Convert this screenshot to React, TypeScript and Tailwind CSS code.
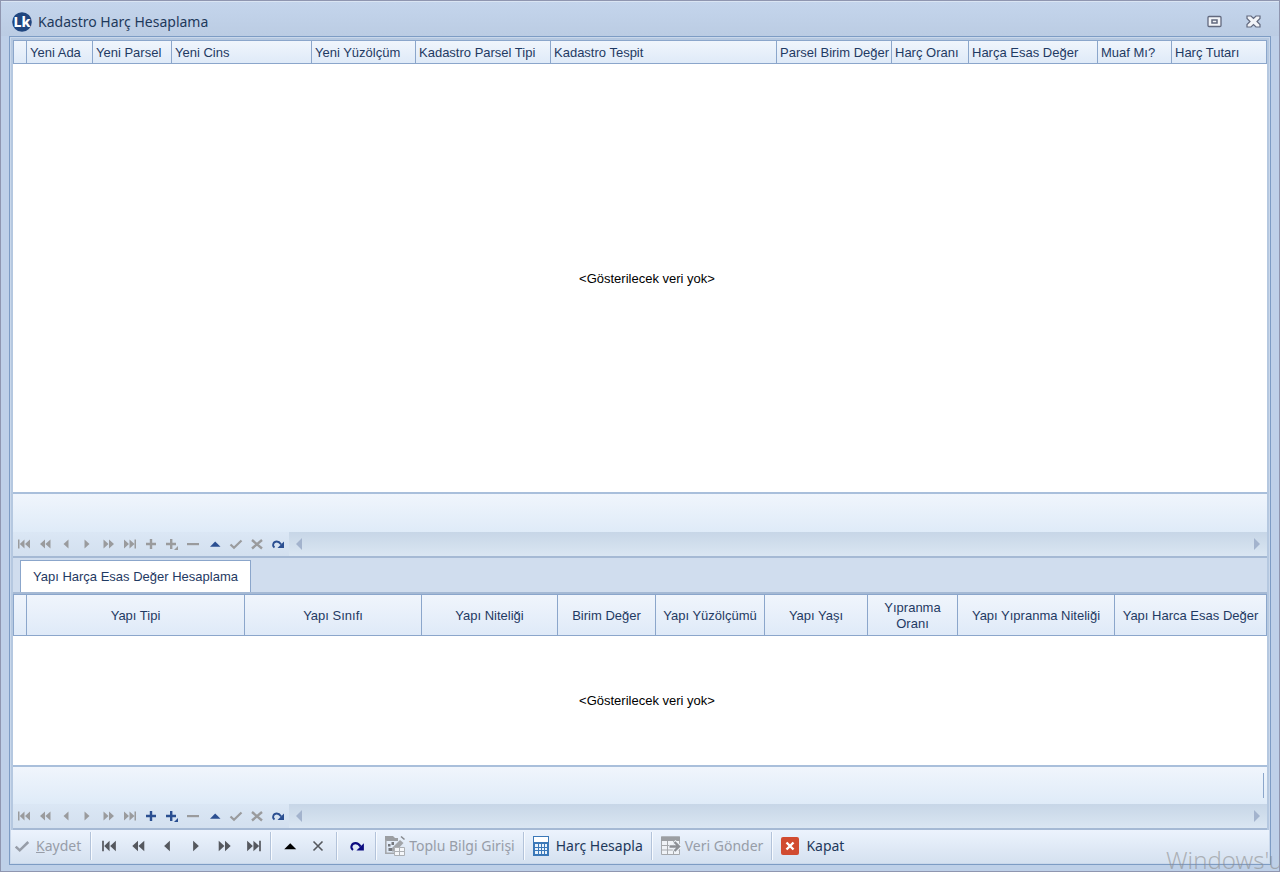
import type { ReactNode } from 'react';

interface Column {
  title: string;
  width: string;
}

const parcelColumns: Column[] = [
  { title: 'Yeni Ada', width: 'w-[66px]' },
  { title: 'Yeni Parsel', width: 'w-[79px]' },
  { title: 'Yeni Cins', width: 'w-[140px]' },
  { title: 'Yeni Yüzölçüm', width: 'w-[104px]' },
  { title: 'Kadastro Parsel Tipi', width: 'w-[135px]' },
  { title: 'Kadastro Tespit', width: '' },
  { title: 'Parsel Birim Değer', width: 'w-[115px]' },
  { title: 'Harç Oranı', width: 'w-[77px]' },
  { title: 'Harça Esas Değer', width: 'w-[129px]' },
  { title: 'Muaf Mı?', width: 'w-[74px]' },
  { title: 'Harç Tutarı', width: 'w-[95px]' },
];

const buildingColumns: Column[] = [
  { title: 'Yapı Tipi', width: '' },
  { title: 'Yapı Sınıfı', width: 'w-[177px]' },
  { title: 'Yapı Niteliği', width: 'w-[136px]' },
  { title: 'Birim Değer', width: 'w-[98px]' },
  { title: 'Yapı Yüzölçümü', width: 'w-[109px]' },
  { title: 'Yapı Yaşı', width: 'w-[103px]' },
  { title: 'Yıpranma Oranı', width: 'w-[90px]' },
  { title: 'Yapı Yıpranma Niteliği', width: 'w-[157px]' },
  { title: 'Yapı Harca Esas Değer', width: 'w-[152px]' },
];

type IconName =
  | 'first' | 'prevPage' | 'prev' | 'next' | 'nextPage' | 'last'
  | 'add' | 'append' | 'remove' | 'edit' | 'post' | 'cancel' | 'refresh';

const shapes: Record<IconName, ReactNode> = {
  first: <path d="M1 2.5h1.5v9H1zM7.5 2.5v9L2.8 7zM13 2.5v9L8 7z" />,
  prevPage: <path d="M7 2.5v9L2 7zM12.5 2.5v9L7.4 7z" />,
  prev: <path d="M9.5 2.5v9L4.5 7z" />,
  next: <path d="M4.5 2.5v9l5-4.5z" />,
  nextPage: <path d="M1.5 2.5v9l5-4.5zM7 2.5v9L12 7z" />,
  last: <path d="M1 2.5v9L6 7zM6.5 2.5v9l5-4.5zM11.5 2.5H13v9h-1.5z" />,
  add: <path d="M5.8 2h2.4v3.8H12v2.4H8.2V12H5.8V8.2H2V5.8h3.8z" />,
  append: <path d="M5 2h2.4v3.8H11v2.4H7.4V12H5V8.2H1V5.8h4zM13 9v4H9z" />,
  remove: <path d="M1 6h12v2.2H1z" />,
  edit: <path d="M2 9.8h10.500L7.200 4.500z" />,
  post: <path d="M1.5 7.500l3.500 3.300L12.500 3.500" fill="none" stroke="currentColor" strokeWidth="2.200" />,
  cancel: <path d="M2 3l10 8.500M12 3L2 11.500" fill="none" stroke="currentColor" strokeWidth="2.400" />,
  refresh: (
    <>
      <path d="M3.500 10.500C.8 8.500 2.300 4.500 5.800 4.500c2.200 0 3.200 1.200 4.400 3" fill="none" stroke="currentColor" strokeWidth="1.800" />
      <path d="M13 4.500v6.500H6.500z" />
    </>
  ),
};

function Icon({ name, className = 'size-3.5' }: { name: IconName; className?: string }) {
  return (
    <svg viewBox="0 0 14 14" fill="currentColor" className={className} aria-hidden="true">
      {shapes[name]}
    </svg>
  );
}

const navItems: { icon: IconName; label: string }[] = [
  { icon: 'first', label: 'İlk' },
  { icon: 'prevPage', label: 'Önceki sayfa' },
  { icon: 'prev', label: 'Önceki' },
  { icon: 'next', label: 'Sonraki' },
  { icon: 'nextPage', label: 'Sonraki sayfa' },
  { icon: 'last', label: 'Son' },
  { icon: 'add', label: 'Ekle' },
  { icon: 'append', label: 'Sona ekle' },
  { icon: 'remove', label: 'Sil' },
  { icon: 'edit', label: 'Düzenle' },
  { icon: 'post', label: 'Onayla' },
  { icon: 'cancel', label: 'İptal' },
  { icon: 'refresh', label: 'Yenile' },
];

function Grid({ columns, centered = false }: { columns: Column[]; centered?: boolean }) {
  return (
    <table className="h-full w-full table-fixed border-separate border-spacing-0 bg-white">
      <thead className="text-[#1f3a63]">
        <tr className={centered ? 'h-[42px]' : 'h-6'}>
          <td className="w-[14px] border border-[#8ba6cb] bg-linear-to-b from-[#f0f5fc] to-[#dfeaf8]" />
          {columns.map((column) => (
            <th
              key={column.title}
              scope="col"
              className={`${column.width} ${centered ? 'px-1 text-center' : 'pr-0 pl-[3px] text-left whitespace-nowrap'} border-y border-r border-[#8ba6cb] bg-linear-to-b from-[#f0f5fc] to-[#dfeaf8] pt-0.5 pb-0 leading-4 font-normal`}
            >
              {column.title}
            </th>
          ))}
        </tr>
      </thead>
      <tbody>
        <tr>
          <td />
          <td colSpan={columns.length} className="pt-0.5 text-center text-black">
            &lt;Gösterilecek veri yok&gt;
          </td>
        </tr>
      </tbody>
    </table>
  );
}

function Navigator({ active }: { active: IconName[] }) {
  return (
    <div className="flex h-6 bg-linear-to-b from-[#dbe7f5] to-[#d3e0ef]">
      <div className="flex w-[276px]">
        {navItems.map((item) => (
          <button
            key={item.icon}
            type="button"
            aria-label={item.label}
            disabled={!active.includes(item.icon)}
            className="flex flex-1 items-center justify-center text-[#2b4f91] disabled:text-[#9a9b9d]"
          >
            <Icon name={item.icon} />
          </button>
        ))}
      </div>
      <div className="flex flex-1 items-center justify-between bg-linear-to-b from-[#c7d6e7] to-[#dae6f2] px-1.5 text-[#a3b3cd]">
        <button type="button" aria-label="Sola kaydır">
          <svg viewBox="0 0 8 12" className="h-3 w-2" fill="currentColor"><path d="M7 0v12L1 6z" /></svg>
        </button>
        <button type="button" aria-label="Sağa kaydır">
          <svg viewBox="0 0 8 12" className="h-3 w-2" fill="currentColor"><path d="M1 0v12l6-6z" /></svg>
        </button>
      </div>
    </div>
  );
}

function Separator() {
  return <div className="h-7 w-0.5 border-l border-[#b3c3da] bg-[#f8fbff]" />;
}

function ToolButton({ label, children, disabled }: { label: ReactNode; children: ReactNode; disabled?: boolean }) {
  return (
    <button
      type="button"
      disabled={disabled}
      className="flex items-center gap-[7px] px-2 text-[#1e395b] disabled:text-[#979da8]"
    >
      {children}
      {label}
    </button>
  );
}

function BulkIcon() {
  return (
    <svg viewBox="0 0 20 20" className="-mr-[3px] size-5" aria-hidden="true">
      <path d="M0 0h8l2 2h3v3H0z" fill="#9b9ea2" />
      <path d="M.8 4v13.200H9" fill="none" stroke="#a4a7ab" strokeWidth="1.600" />
      <path d="M3 8h2.500v2.500H3zM6.500 6H9v3H6.500zM3.500 12h3.500v3H3.500z" fill="#75787d" />
      <path d="M15 4l3.500 3-8 8.500H7V12z" fill="#a2a5a9" />
      <path d="M16.500 0l3.500 3-1 1-3.500-3z" fill="#85888d" />
      <path d="M9.500 11.500h10v8h-10zM9.500 15.500h10M14.500 11.500v8" fill="#f5f7fa" stroke="#adb0b4" />
    </svg>
  );
}

function CalculatorIcon() {
  return (
    <svg viewBox="0 0 16 20" className="h-5 w-4" aria-hidden="true">
      <path d="M0 0h16v20H0z" fill="#3b78b8" />
      <path d="M1 1h14v5H1z" fill="#fff" />
      <path
        d="M2 8h3v3H2zM6 8h2v3H6zM9 8h2v3H9zM12 8h2v3h-2zM2 12h3v2H2zM6 12h2v2H6zM9 12h2v2H9zM12 12h2v2h-2zM2 15h3v3H2zM6 15h2v3H6zM9 15h2v3H9zM12 15h2v3h-2z"
        fill="#e9f2fb"
      />
    </svg>
  );
}

function SendIcon() {
  return (
    <svg viewBox="0 0 20 20" className="-mr-[3px] size-5" aria-hidden="true">
      <path d="M.5 1h18v17.500H.5zM.5 9.500h18M.5 14h18M6.500 4v14M12.500 4v14" fill="#f0f3f7" stroke="#a6a9ad" />
      <path d="M0 .5h19V5H0z" fill="#9b9ea2" />
      <path d="M8 10.500h10M13 5.500l5 5-5 5" fill="none" stroke="#edf2f8" strokeWidth="4.500" />
      <path d="M8.500 10.500H18M13.500 6l4.500 4.500-4.500 4.500" fill="none" stroke="#8c8f94" strokeWidth="2.400" />
    </svg>
  );
}

const moveItems = navItems.slice(0, 6);

export default function App() {
  return (
    <div className="relative flex h-screen min-h-[560px] flex-col border border-[#8f96b0] bg-[#bed0e8] px-2 pb-1.5 font-['Noto_Sans',sans-serif] text-sm">
      <header className="-mx-2 flex h-[35px] shrink-0 items-center border-t border-[#dae5f3] bg-linear-to-b from-[#c4d5ec] to-[#bbcce3] pt-[5px] pr-[18px] pl-[11px]">
        <svg viewBox="0 0 20 20" className="mr-1.5 size-5" aria-hidden="true">
          <circle cx="10" cy="10" r="9.800" fill="#20467f" />
          <text x="10" y="15" textAnchor="middle" fill="#fff" fontSize="14" fontWeight="800" fontFamily="Noto Sans">
            Lk
          </text>
        </svg>
        <h1 className="flex-1 text-[#1e395b]">Kadastro Harç Hesaplama</h1>
        <div className="flex gap-6 text-[#62697e]">
          <button type="button" aria-label="Ekranı kapla">
            <svg viewBox="0 0 15 13" className="h-[13px] w-[15px]" fill="#f2f4f8" stroke="currentColor">
              <rect x="1" y="1.500" width="13" height="10" rx="1" strokeWidth="1.300" />
              <rect x="5" y="5" width="5" height="3" strokeWidth="1.500" />
            </svg>
          </button>
          <button type="button" aria-label="Kapat">
            <svg viewBox="0 0 15 13" className="h-[13px] w-[15px]" fill="#f2f4f8" stroke="currentColor">
              <path d="M1 1h4l2.500 2.500L10 1h4v2.500l-3 3 3 3V12h-4L7.500 9.500 5 12H1V9.500l3-3-3-3z" strokeWidth="1.200" />
            </svg>
          </button>
        </div>
      </header>

      <main className="flex min-h-0 flex-1 flex-col border border-[#7d9cc4] bg-[#cad8eb] p-px">
        <div className="flex min-h-0 flex-1 flex-col border-x-2 border-t-2 border-[#b5c8e0] bg-[#d0ddee] font-['Liberation_Sans',Arial,sans-serif] text-[13px]">
          <section className="flex min-h-0 flex-1 flex-col border-b-2 border-[#a5b9d4]">
            <div className="min-h-0 flex-1">
              <Grid columns={parcelColumns} />
            </div>
            <div className="h-10 border-t-2 border-[#a9bfdb] bg-linear-to-b from-[#f0f5fc] to-[#dfebf8]" />
            <Navigator active={['edit', 'refresh']} />
          </section>

          <div role="tablist" className="flex h-9 shrink-0 items-end border-b-2 border-[#a5b9d4] px-[7px]">
            <button
              type="button"
              role="tab"
              aria-selected="true"
              className="h-8 border border-b-0 border-[#8ba6cb] bg-white px-3 pt-0.5 text-[#1f3a63]"
            >
              Yapı Harça Esas Değer Hesaplama
            </button>
          </div>

          <section className="flex shrink-0 flex-col border-b-2 border-[#a5b9d4]">
            <div className="h-[171px]">
              <Grid columns={buildingColumns} centered />
            </div>
            <div className="flex h-[39px] justify-end border-t-2 border-[#a9bfdb] bg-linear-to-b from-[#f0f5fc] to-[#dfebf8] py-1.5 pr-[3px]">
              <div className="w-px bg-[#8ba6cb]" />
            </div>
            <Navigator active={['add', 'append', 'edit', 'refresh']} />
          </section>
        </div>

        <div role="toolbar" className="flex h-[33px] shrink-0 items-center bg-linear-to-b from-[#ecf3fd] to-[#d5e1f0] pb-0.5">
          <button type="button" disabled className="flex items-center gap-1.5 pr-[9px] pl-[3px] text-[#979da8]">
            <Icon name="post" className="size-4" />
            <span><u>K</u>aydet</span>
          </button>
          <Separator />
          <div className="flex px-0.5">
            {moveItems.map((item) => (
              <button key={item.icon} type="button" aria-label={item.label} className="flex w-[29px] justify-center text-[#55585e]">
                <Icon name={item.icon} className="size-4" />
              </button>
            ))}
          </div>
          <Separator />
          <div className="flex px-1">
            <button type="button" aria-label="Düzenle" className="flex w-7 justify-center text-black">
              <Icon name="edit" className="size-4" />
            </button>
            <button type="button" aria-label="İptal" className="flex w-7 items-center justify-center text-[#55585e]">
              <svg viewBox="0 0 14 14" className="size-3.5" stroke="currentColor" strokeWidth="1.600" aria-hidden="true">
                <path d="M2.500 2.500l9 9M11.500 2.500l-9 9" />
              </svg>
            </button>
          </div>
          <Separator />
          <button type="button" aria-label="Yenile" className="flex w-[37px] justify-center text-[#0b0b80]">
            <Icon name="refresh" className="size-4" />
          </button>
          <Separator />
          <ToolButton label="Toplu Bilgi Girişi" disabled><BulkIcon /></ToolButton>
          <Separator />
          <ToolButton label="Harç Hesapla"><CalculatorIcon /></ToolButton>
          <Separator />
          <ToolButton label="Veri Gönder" disabled><SendIcon /></ToolButton>
          <Separator />
          <ToolButton label="Kapat">
            <svg viewBox="0 0 18 18" className="size-[18px]" aria-hidden="true">
              <rect width="18" height="18" rx="2" fill="#d14b30" />
              <path d="M5.500 5.500l7 7M12.500 5.500l-7 7" stroke="#fff" strokeWidth="2.400" />
            </svg>
          </ToolButton>
        </div>
      </main>

      <div className="pointer-events-none absolute right-0 bottom-0 h-[27px] w-[113px] overflow-hidden text-[24px] leading-8 font-light whitespace-nowrap text-[#8d8d8d]/60">
        Windows'u
      </div>
    </div>
  );
}
